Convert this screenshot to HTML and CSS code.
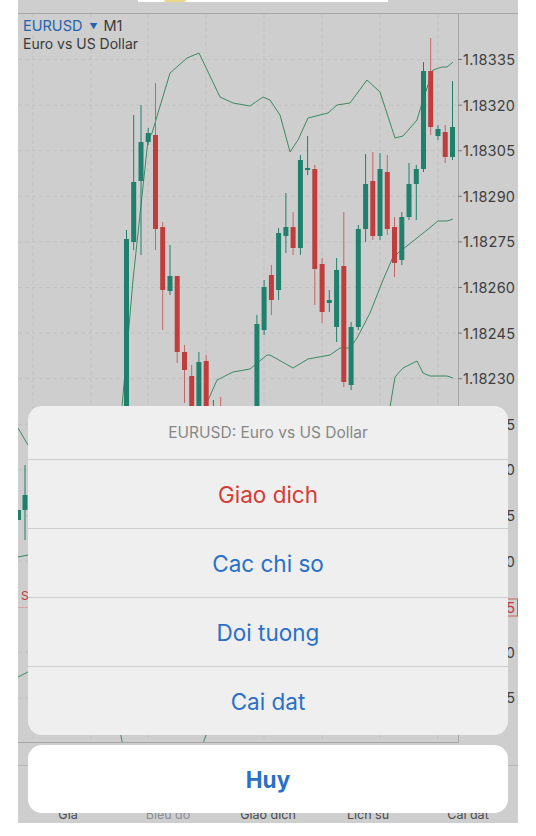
FILE: index.html
```html
<!DOCTYPE html>
<html lang="vi">
<head>
<meta charset="utf-8">
<title>EURUSD M1</title>
<link rel="stylesheet" href="styles.css">
</head>
<body>
<div class="screen">
  <div class="toolbar"><div class="notch"><span class="notch-dot"></span></div></div>
  <div class="chart">
    <svg class="chart-svg" width="500" height="730" viewBox="18 13 500 730" xmlns="http://www.w3.org/2000/svg">
      <defs><clipPath id="plot"><rect x="18" y="14" width="440" height="729"/></clipPath></defs>
      <g class="grid">
        <line x1="33" y1="14" x2="33" y2="743"/><line x1="91" y1="14" x2="91" y2="743"/>
        <line x1="148" y1="14" x2="148" y2="743"/><line x1="206" y1="14" x2="206" y2="743"/>
        <line x1="264" y1="14" x2="264" y2="743"/><line x1="322" y1="14" x2="322" y2="743"/>
        <line x1="380" y1="14" x2="380" y2="743"/><line x1="438" y1="14" x2="438" y2="743"/>
        <line x1="18" y1="59.5" x2="458" y2="59.5"/><line x1="18" y1="105.1" x2="458" y2="105.1"/>
        <line x1="18" y1="150.7" x2="458" y2="150.7"/><line x1="18" y1="196.3" x2="458" y2="196.3"/>
        <line x1="18" y1="241.9" x2="458" y2="241.9"/><line x1="18" y1="287.5" x2="458" y2="287.5"/>
        <line x1="18" y1="333.1" x2="458" y2="333.1"/><line x1="18" y1="378.7" x2="458" y2="378.7"/>
        <line x1="18" y1="424.3" x2="458" y2="424.3"/><line x1="18" y1="469.9" x2="458" y2="469.9"/>
        <line x1="18" y1="515.5" x2="458" y2="515.5"/><line x1="18" y1="561.1" x2="458" y2="561.1"/>
        <line x1="18" y1="652.3" x2="458" y2="652.3"/><line x1="18" y1="697.9" x2="458" y2="697.9"/>
      </g>
      <g clip-path="url(#plot)">
        <g class="band">
          <polyline points="18,428 28,445 60,470 100,455 115,435 122,407 133,280 148,140 152,133 170,73 187,58 199,53 220,97 233,103 250,106 263,97 270,100 280,115 290,152 298,140 308,118 328,113 337,105 350,103 367,80 380,92 395,138 403,136 417,120 423,100 433,70 442,67 447,67 453,62"/>
          <polyline points="18,557 28,555 80,540 120,520 150,470 180,440 206,405 217,380 233,372 250,369 267,355 270,355 293,368 308,359 330,355 340,348 350,348 357,338 370,313 383,280 393,257 427,230 438,221 447,221 453,219"/>
          <polyline points="18,677 28,672 80,690 118,720 124,752 200,752 206,735 230,700 300,600 360,480 390,407 395,377 403,368 417,361 423,373 430,376 447,376 453,378"/>
        </g>
        <line class="bid-line" x1="18" y1="607.5" x2="458" y2="607.5"/>
        <text class="bid-tag" x="21" y="600">SELL 0.01</text>
        <g class="up">
          <line x1="25" y1="465" x2="25" y2="540"/><rect x="22.5" y="495" width="5" height="15"/>
          <rect x="16" y="510" width="5" height="10"/>
          <line x1="126.5" y1="230" x2="126.5" y2="460"/><rect x="124" y="239" width="5" height="201"/>
          <line x1="133.7" y1="115" x2="133.7" y2="250"/><rect x="131.2" y="182" width="5" height="60"/>
          <line x1="141" y1="105" x2="141" y2="255"/><rect x="138.5" y="142" width="5" height="39"/>
          <line x1="148.2" y1="128" x2="148.2" y2="145"/><rect x="145.7" y="133" width="5" height="9"/>
          <line x1="170" y1="245" x2="170" y2="295"/><rect x="167.5" y="276" width="5" height="15"/>
          <line x1="198.9" y1="352" x2="198.9" y2="430"/><rect x="196.4" y="362" width="5" height="58"/>
          <line x1="213.4" y1="400" x2="213.4" y2="450"/><rect x="210.9" y="410" width="5" height="30"/>
          <line x1="227.9" y1="415" x2="227.9" y2="480"/><rect x="225.4" y="430" width="5" height="40"/>
          <line x1="242.4" y1="425" x2="242.4" y2="480"/><rect x="239.9" y="440" width="5" height="30"/>
          <line x1="256.9" y1="315" x2="256.9" y2="440"/><rect x="254.4" y="324" width="5" height="106"/>
          <line x1="264.1" y1="280" x2="264.1" y2="335"/><rect x="261.6" y="287" width="5" height="43"/>
          <line x1="278.6" y1="228" x2="278.6" y2="300"/><rect x="276.1" y="233" width="5" height="57"/>
          <line x1="285.9" y1="193" x2="285.9" y2="253"/><rect x="283.4" y="227" width="5" height="9"/>
          <line x1="300.4" y1="155" x2="300.4" y2="255"/><rect x="297.9" y="160" width="5" height="88"/>
          <line x1="307.6" y1="136" x2="307.6" y2="175"/><rect x="305.1" y="168" width="5" height="2"/>
          <line x1="329.3" y1="290" x2="329.3" y2="312"/><rect x="326.8" y="300" width="5" height="3"/>
          <line x1="336.6" y1="258" x2="336.6" y2="342"/><rect x="334.1" y="270" width="5" height="57"/>
          <line x1="351.1" y1="322" x2="351.1" y2="390"/><rect x="348.6" y="327" width="5" height="58"/>
          <line x1="358.3" y1="225" x2="358.3" y2="330"/><rect x="355.8" y="229" width="5" height="98"/>
          <line x1="365.6" y1="154" x2="365.6" y2="242"/><rect x="363.1" y="184" width="5" height="45"/>
          <line x1="380" y1="153" x2="380" y2="240"/><rect x="377.5" y="169" width="5" height="67"/>
          <line x1="401.8" y1="212" x2="401.8" y2="265"/><rect x="399.3" y="217" width="5" height="43"/>
          <line x1="409" y1="163" x2="409" y2="220"/><rect x="406.5" y="184" width="5" height="33"/>
          <line x1="416.3" y1="165" x2="416.3" y2="220"/><rect x="413.8" y="169" width="5" height="15"/>
          <line x1="423.5" y1="62" x2="423.5" y2="172"/><rect x="421" y="71" width="5" height="98"/>
          <line x1="438" y1="125" x2="438" y2="140"/><rect x="435.5" y="129" width="5" height="7"/>
          <line x1="452.5" y1="81" x2="452.5" y2="160"/><rect x="450" y="127" width="5" height="30"/>
        </g>
        <g class="down">
          <line x1="155.5" y1="83" x2="155.5" y2="250"/><rect x="153" y="135" width="5" height="94"/>
          <line x1="162.7" y1="222" x2="162.7" y2="330"/><rect x="160.2" y="227" width="5" height="63"/>
          <line x1="177.2" y1="276" x2="177.2" y2="363"/><rect x="174.7" y="276" width="5" height="76"/>
          <line x1="184.5" y1="345" x2="184.5" y2="403"/><rect x="182" y="352" width="5" height="18"/>
          <line x1="191.7" y1="365" x2="191.7" y2="430"/><rect x="189.2" y="376" width="5" height="44"/>
          <line x1="206.2" y1="355" x2="206.2" y2="440"/><rect x="203.7" y="361" width="5" height="69"/>
          <line x1="220.7" y1="397" x2="220.7" y2="450"/><rect x="218.2" y="410" width="5" height="30"/>
          <line x1="235.2" y1="430" x2="235.2" y2="490"/><rect x="232.7" y="440" width="5" height="40"/>
          <line x1="249.6" y1="410" x2="249.6" y2="470"/><rect x="247.1" y="420" width="5" height="40"/>
          <line x1="271.4" y1="265" x2="271.4" y2="315"/><rect x="268.9" y="275" width="5" height="25"/>
          <line x1="293.1" y1="212" x2="293.1" y2="255"/><rect x="290.6" y="227" width="5" height="21"/>
          <line x1="314.8" y1="165" x2="314.8" y2="305"/><rect x="312.3" y="169" width="5" height="100"/>
          <line x1="322.1" y1="258" x2="322.1" y2="323"/><rect x="319.6" y="264" width="5" height="48"/>
          <line x1="343.8" y1="212" x2="343.8" y2="387"/><rect x="341.3" y="266" width="5" height="116"/>
          <line x1="372.8" y1="152" x2="372.8" y2="240"/><rect x="370.3" y="181" width="5" height="55"/>
          <line x1="387.3" y1="155" x2="387.3" y2="235"/><rect x="384.8" y="172" width="5" height="57"/>
          <line x1="394.5" y1="217" x2="394.5" y2="277"/><rect x="392" y="227" width="5" height="36"/>
          <line x1="430.7" y1="38" x2="430.7" y2="135"/><rect x="428.2" y="71" width="5" height="56"/>
          <line x1="445.2" y1="125" x2="445.2" y2="163"/><rect x="442.7" y="132" width="5" height="25"/>
        </g>
      </g>
      <g class="frame">
        <line x1="18" y1="13.5" x2="518" y2="13.5"/>
        <line x1="458.5" y1="13" x2="458.5" y2="743"/>
        <line x1="18" y1="742.5" x2="458.5" y2="742.5"/>
      </g>
      <g class="ticks">
        <line x1="458" y1="59.5" x2="462" y2="59.5"/><line x1="458" y1="105.1" x2="462" y2="105.1"/>
        <line x1="458" y1="150.7" x2="462" y2="150.7"/><line x1="458" y1="196.3" x2="462" y2="196.3"/>
        <line x1="458" y1="241.9" x2="462" y2="241.9"/><line x1="458" y1="287.5" x2="462" y2="287.5"/>
        <line x1="458" y1="333.1" x2="462" y2="333.1"/><line x1="458" y1="378.7" x2="462" y2="378.7"/>
        <line x1="458" y1="424.3" x2="462" y2="424.3"/><line x1="458" y1="469.9" x2="462" y2="469.9"/>
        <line x1="458" y1="515.5" x2="462" y2="515.5"/><line x1="458" y1="561.1" x2="462" y2="561.1"/>
        <line x1="458" y1="652.3" x2="462" y2="652.3"/><line x1="458" y1="697.9" x2="462" y2="697.9"/>
      </g>
      <g class="prices">
        <text x="463" y="59.5" textLength="52">1.18335</text>
        <text x="463" y="105.1" textLength="52">1.18320</text>
        <text x="463" y="150.7" textLength="52">1.18305</text>
        <text x="463" y="196.3" textLength="52">1.18290</text>
        <text x="463" y="241.9" textLength="52">1.18275</text>
        <text x="463" y="287.5" textLength="52">1.18260</text>
        <text x="463" y="333.1" textLength="52">1.18245</text>
        <text x="463" y="378.7" textLength="52">1.18230</text>
        <text x="463" y="424.3" textLength="52">1.18215</text>
        <text x="463" y="469.9" textLength="52">1.18200</text>
        <text x="463" y="515.5" textLength="52">1.18185</text>
        <text x="463" y="561.1" textLength="52">1.18170</text>
        <text x="463" y="652.3" textLength="52">1.18140</text>
        <text x="463" y="697.9" textLength="52">1.18125</text>
      </g>
      <rect class="bid-box" x="459.5" y="599" width="58" height="17"/>
      <text class="bid-price" x="463" y="607.5" textLength="52">1.18155</text>
    </svg>
    <div class="symbol">
      <div class="symbol-line"><span class="symbol-name">EURUSD</span><span class="symbol-caret">▼</span><span class="symbol-tf">M1</span></div>
      <div class="symbol-desc">Euro vs US Dollar</div>
    </div>
  </div>
  <div class="timeaxis"></div>
  <nav class="tabbar">
    <span class="tab">Gia</span>
    <span class="tab tab-active">Bieu do</span>
    <span class="tab">Giao dich</span>
    <span class="tab">Lich su</span>
    <span class="tab">Cai dat</span>
  </nav>
  <div class="sheet">
    <div class="sheet-group">
      <div class="sheet-title">EURUSD: Euro vs US Dollar</div>
      <div class="sheet-action destructive">Giao dich</div>
      <div class="sheet-action">Cac chi so</div>
      <div class="sheet-action">Doi tuong</div>
      <div class="sheet-action">Cai dat</div>
    </div>
    <div class="sheet-cancel">Huy</div>
  </div>
</div>
</body>
</html>
```
FILE: styles.css
```css
html, body {
  margin: 0;
  padding: 0;
  background: #ffffff;
}

body {
  font-family: Inter, "Liberation Sans", "DejaVu Sans", sans-serif;
}

.screen {
  position: relative;
  margin-left: 18px;
  width: 500px;
  height: 823px;
  background: #cecece;
  overflow: hidden;
  display: flex;
  flex-direction: column;
}

.toolbar {
  height: 13px;
  flex: none;
}

.notch {
  margin-left: 120px;
  width: 250px;
  height: 2px;
  background: #ffffff;
  position: relative;
}

.notch-dot {
  position: absolute;
  left: 26px;
  top: 0;
  width: 22px;
  height: 2px;
  border-radius: 0 0 11px 11px;
  background: #e9d98a;
}

.chart {
  position: relative;
  height: 730px;
  flex: none;
}

.chart-svg {
  display: block;
}

.grid line {
  stroke: #c2c2c2;
  stroke-width: 1;
  stroke-dasharray: 4 3;
}

.band polyline {
  fill: none;
  stroke: #3c8a63;
  stroke-width: 1;
}

.up rect { fill: #1f806c; }
.up line { stroke: #1f806c; stroke-width: 1; }
.down rect { fill: #c03d3e; }
.down line { stroke: #c76465; stroke-width: 1; }

.bid-line {
  stroke: #d9a3a3;
  stroke-width: 1;
}

.bid-tag {
  font-family: Inter, "Liberation Sans", sans-serif;
  font-size: 12px;
  fill: #c03d3e;
}

.frame line {
  stroke: #a6a6a6;
  stroke-width: 1;
}

.ticks line {
  stroke: #777777;
  stroke-width: 1;
}

.prices text {
  font-family: Inter, "Liberation Sans", sans-serif;
  font-size: 14.5px;
  fill: #3e3e3e;
  dominant-baseline: central;
}

.bid-box {
  fill: #cecece;
  stroke: #c9625f;
  stroke-width: 1;
}

.bid-price {
  font-family: Inter, "Liberation Sans", sans-serif;
  font-size: 14.5px;
  fill: #c03d3e;
  dominant-baseline: central;
}

.symbol {
  position: absolute;
  left: 5px;
  top: 4px;
  font-size: 14px;
  line-height: 18px;
  color: #3a3a3a;
}

.symbol-line {
  display: flex;
  align-items: center;
}

.symbol-name {
  color: #2463ad;
  font-size: 14.5px;
}

.symbol-caret {
  color: #2463ad;
  font-size: 8px;
  margin: 0 6px 0 7px;
}

.symbol-tf {
  font-size: 14.5px;
}

.timeaxis {
  height: 22px;
  flex: none;
}

.tabbar {
  flex: none;
  height: 58px;
  box-sizing: border-box;
  border-top: 1px solid #b7b7b7;
  display: flex;
  align-items: flex-end;
  padding-bottom: 1px;
}

.tab {
  flex: 1;
  text-align: center;
  font-size: 12.5px;
  line-height: 14px;
  color: #4a4a4a;
}

.tab-active {
  color: #8c8f96;
}

.sheet {
  position: absolute;
  left: 10px;
  top: 406px;
  width: 480px;
  display: flex;
  flex-direction: column;
  gap: 10px;
}

.sheet-group {
  background: #efefef;
  border-radius: 14px;
  overflow: hidden;
}

.sheet-title {
  height: 53px;
  display: flex;
  align-items: center;
  justify-content: center;
  font-size: 15.5px;
  color: #878787;
}

.sheet-action {
  height: 68px;
  border-top: 1px solid #cdcdcd;
  display: flex;
  align-items: center;
  justify-content: center;
  font-size: 22.5px;
  color: #2870c8;
}

.sheet-action.destructive {
  color: #d63c35;
}

.sheet-cancel {
  height: 68px;
  background: #ffffff;
  border-radius: 14px;
  display: flex;
  align-items: center;
  justify-content: center;
  font-size: 22.5px;
  font-weight: 700;
  color: #2870c8;
}
```
